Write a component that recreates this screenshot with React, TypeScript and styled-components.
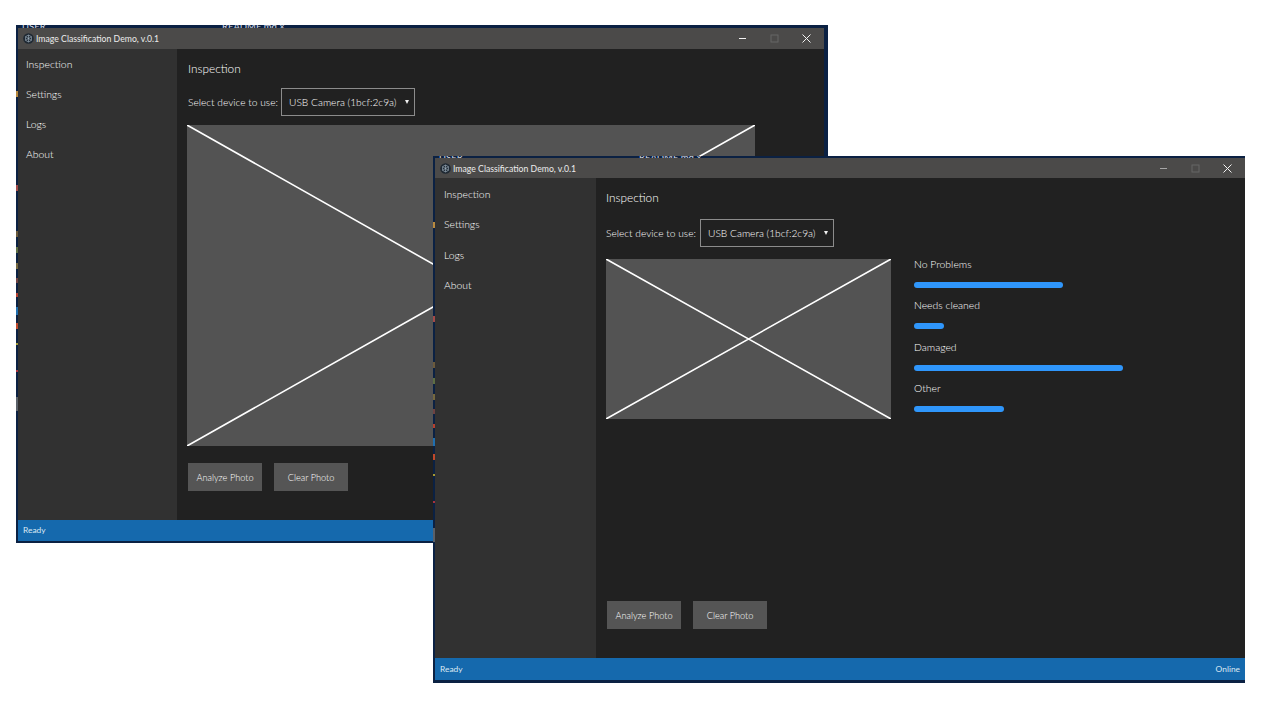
import styled, { createGlobalStyle } from 'styled-components';

type WindowMetrics = {
  left: number;
  top: number;
  height: number;
  rightEdge: number;
  bottomEdge: number;
  stripHeight: number;
  titleHeight: number;
  statusHeight: number;
  sidebarWidth: number;
  navHeight: number;
  navTop: number;
  navIndent: number;
  textIndent: number;
  headingGap: number;
  deviceGap: number;
  imageWidth: number;
  imageHeight: number;
  minimizeColor: string;
};

type DemoWindowProps = {
  metrics: WindowMetrics;
  showOnline?: boolean;
  showResults?: boolean;
};

const backWindow: WindowMetrics = {
  left: 16,
  top: 25,
  height: 518,
  rightEdge: 4,
  bottomEdge: 2,
  stripHeight: 3,
  titleHeight: 21,
  statusHeight: 21,
  sidebarWidth: 159,
  navHeight: 30,
  navTop: 0,
  navIndent: 8,
  textIndent: 1,
  headingGap: 10,
  deviceGap: 9,
  imageWidth: 568,
  imageHeight: 321,
  minimizeColor: '#f2f2f2',
};

const frontWindow: WindowMetrics = {
  left: 433,
  top: 156,
  height: 527,
  rightEdge: 0,
  bottomEdge: 3,
  stripHeight: 2,
  titleHeight: 20,
  statusHeight: 22,
  sidebarWidth: 161,
  navHeight: 30.4,
  navTop: 1,
  navIndent: 9,
  textIndent: 0,
  headingGap: 12,
  deviceGap: 12,
  imageWidth: 285,
  imageHeight: 160,
  minimizeColor: '#a6a6a6',
};

const results = [
  { label: 'No Problems', width: 149 },
  { label: 'Needs cleaned', width: 30 },
  { label: 'Damaged', width: 209 },
  { label: 'Other', width: 90 },
];

const navItems = ['Inspection', 'Settings', 'Logs', 'About'];

// bits of the desktop that show through down the left edge of each window
const edgeSpecks = `linear-gradient(
  to bottom,
  transparent 66px, #b98a3f 66px, #b98a3f 72px,
  transparent 72px, transparent 160px, #a34a4a 160px, #a34a4a 166px,
  transparent 166px, transparent 206px, #6b5a3c 206px, #6b5a3c 212px,
  transparent 212px, transparent 222px, #5d6e44 222px, #5d6e44 228px,
  transparent 228px, transparent 238px, #75683f 238px, #75683f 244px,
  transparent 244px, transparent 253px, #6e4242 253px, #6e4242 258px,
  transparent 258px, transparent 268px, #b5402f 268px, #b5402f 272px,
  transparent 272px, transparent 282px, #1f6fb0 282px, #1f6fb0 290px,
  transparent 290px, transparent 298px, #c0492c 298px, #c0492c 304px,
  transparent 304px, transparent 318px, #a59a34 318px, #a59a34 320px,
  transparent 320px, transparent 345px, #a8323f 345px, #a8323f 347px,
  transparent 347px, transparent 372px, #5a6068 372px, #5a6068 386px,
  transparent 386px
)`;

const GlobalStyle = createGlobalStyle`
  html, body {
    margin: 0;
    background: #ffffff;
  }

  body {
    font-family: Lato, 'Open Sans', sans-serif;
    font-weight: 300;
  }
`;

const Desktop = styled.div`
  position: relative;
  width: 1280px;
  height: 720px;
  overflow: hidden;
  background: #ffffff;
`;

const WindowFrame = styled.section<{ $metrics: WindowMetrics }>`
  position: absolute;
  left: ${({ $metrics }) => $metrics.left}px;
  top: ${({ $metrics }) => $metrics.top}px;
  width: 812px;
  height: ${({ $metrics }) => $metrics.height}px;
  display: flex;
  flex-direction: column;
  box-sizing: border-box;
  padding: 0 ${({ $metrics }) => $metrics.rightEdge}px ${({ $metrics }) => $metrics.bottomEdge}px 2px;
  background: ${edgeSpecks} left top / 2px 100% no-repeat, #0b2143;
`;

const BehindStrip = styled.div<{ $height: number }>`
  height: ${({ $height }) => $height}px;
  flex: none;
  display: flex;
  overflow: hidden;
  padding-left: 4px;
  font-size: 9.5px;
  font-weight: 400;
  line-height: 3px;
  color: #d4d9e2;
  white-space: nowrap;
`;

const BehindFolder = styled.span`
  width: 200px;
  flex: none;
`;

const TitleBar = styled.header<{ $height: number }>`
  height: ${({ $height }) => $height}px;
  flex: none;
  display: flex;
  align-items: center;
  padding: 0 2px 0 5px;
  background: #4b4a49;
  color: #ececec;
  font-size: 8.7px;
  font-weight: 400;
`;

const AppIcon = styled.svg`
  width: 11px;
  height: 11px;
  flex: none;
  margin-right: 2px;
`;

const TitleText = styled.span`
  flex: 1;
`;

const WindowButton = styled.span`
  width: 32px;
  height: 20px;
  flex: none;
  display: flex;
  align-items: center;
  justify-content: center;
`;

const Main = styled.div`
  flex: 1;
  min-height: 0;
  display: flex;
`;

const Sidebar = styled.nav<{ $width: number; $top: number }>`
  width: ${({ $width }) => $width}px;
  flex: none;
  box-sizing: border-box;
  padding-top: ${({ $top }) => $top}px;
  background: #313131;
`;

const NavItem = styled.div<{ $height: number; $indent: number }>`
  height: ${({ $height }) => $height}px;
  line-height: ${({ $height }) => $height}px;
  padding-left: ${({ $indent }) => $indent}px;
  color: #ffffff;
  font-size: 10.4px;
`;

const Content = styled.main`
  flex: 1;
  min-width: 0;
  display: flex;
  flex-direction: column;
  padding: 11px 10px 29px;
  background: #212121;
  color: #ffffff;
`;

const Heading = styled.h1<{ $gap: number; $indent: number }>`
  margin: 0 0 ${({ $gap }) => $gap}px;
  padding-left: ${({ $indent }) => $indent}px;
  font-size: 11.8px;
  font-weight: 300;
  line-height: 18px;
`;

const DeviceRow = styled.div<{ $gap: number }>`
  display: flex;
  align-items: center;
  gap: 3px;
  margin-bottom: ${({ $gap }) => $gap}px;
  font-size: 10.2px;
  white-space: nowrap;
`;

const DeviceLabel = styled.span<{ $indent: number }>`
  width: 91px;
  flex: none;
  box-sizing: border-box;
  padding-left: ${({ $indent }) => $indent}px;
`;

const DeviceSelect = styled.div`
  width: 134px;
  height: 28px;
  flex: none;
  box-sizing: border-box;
  display: flex;
  align-items: center;
  justify-content: space-between;
  padding: 0 5px 0 7px;
  border: 1px solid #8c8c8c;
`;

const SelectArrow = styled.span`
  width: 0;
  height: 0;
  border-left: 2.5px solid transparent;
  border-right: 2.5px solid transparent;
  border-top: 4px solid #f0f0f0;
`;

const Workspace = styled.div`
  display: flex;
  gap: 23px;
`;

const Preview = styled.div<{ $width: number; $height: number }>`
  width: ${({ $width }) => $width}px;
  height: ${({ $height }) => $height}px;
  flex: none;
  background: #535353;
`;

const PreviewCross = styled.svg`
  display: block;
  width: 100%;
  height: 100%;
`;

const Results = styled.div`
  display: flex;
  flex-direction: column;
  width: 240px;
`;

const ResultRow = styled.div`
  height: 41.4px;
  font-size: 10.4px;
  line-height: 10px;
`;

const ResultBar = styled.div`
  height: 6px;
  margin-top: 13px;
  border-radius: 3px;
  background: #2f96fb;
`;

const Actions = styled.div`
  display: flex;
  gap: 12px;
  margin-top: auto;
  padding-left: 1px;
`;

const ActionButton = styled.button`
  width: 74px;
  height: 28px;
  padding: 0;
  border: none;
  background: #555555;
  color: #ffffff;
  font-family: inherit;
  font-size: 9.2px;
  font-weight: 300;
`;

const StatusBar = styled.footer<{ $height: number }>`
  height: ${({ $height }) => $height}px;
  flex: none;
  display: flex;
  align-items: center;
  justify-content: space-between;
  padding: 0 5px 1px;
  box-sizing: border-box;
  background: #1569ad;
  color: #dbe8f3;
  font-size: 8.4px;
  font-weight: 400;
`;

const DemoWindow = ({ metrics, showOnline, showResults }: DemoWindowProps) => (
  <WindowFrame $metrics={metrics}>
    <BehindStrip $height={metrics.stripHeight}>
      <BehindFolder>USER</BehindFolder>
      <span>README.md ×</span>
    </BehindStrip>
    <TitleBar $height={metrics.titleHeight}>
      <AppIcon viewBox="0 0 12 12" aria-hidden="true">
        <circle cx="6" cy="6" r="5.8" fill="#1f2933" />
        <path
          d="M6 2.2l3.2 1.8v4L6 9.8 2.8 8V4zM2.8 4l6.4 4M9.2 4L2.8 8M6 2.2v7.6"
          fill="none"
          stroke="#9fb0bf"
          strokeWidth="0.7"
        />
      </AppIcon>
      <TitleText>Image Classification Demo, v.0.1</TitleText>
      <WindowButton>
        <svg width="9" height="9" viewBox="0 0 9 9" aria-hidden="true">
          <path d="M1 4.5h7" stroke={metrics.minimizeColor} />
        </svg>
      </WindowButton>
      <WindowButton>
        <svg width="9" height="9" viewBox="0 0 9 9" aria-hidden="true">
          <rect x="1" y="1" width="7" height="7" fill="none" stroke="#666666" />
        </svg>
      </WindowButton>
      <WindowButton>
        <svg width="9" height="9" viewBox="0 0 9 9" aria-hidden="true">
          <path d="M.5.5l8 8M8.5.5l-8 8" stroke="#f2f2f2" />
        </svg>
      </WindowButton>
    </TitleBar>
    <Main>
      <Sidebar $width={metrics.sidebarWidth} $top={metrics.navTop}>
        {navItems.map((item) => (
          <NavItem key={item} $height={metrics.navHeight} $indent={metrics.navIndent}>
            {item}
          </NavItem>
        ))}
      </Sidebar>
      <Content>
        <Heading $gap={metrics.headingGap} $indent={metrics.textIndent}>
          Inspection
        </Heading>
        <DeviceRow $gap={metrics.deviceGap}>
          <DeviceLabel $indent={metrics.textIndent}>Select device to use:</DeviceLabel>
          <DeviceSelect>
            <span>USB Camera (1bcf:2c9a)</span>
            <SelectArrow />
          </DeviceSelect>
        </DeviceRow>
        <Workspace>
          <Preview $width={metrics.imageWidth} $height={metrics.imageHeight}>
            <PreviewCross viewBox={`0 0 ${metrics.imageWidth} ${metrics.imageHeight}`} aria-hidden="true">
              <path
                d={`M0 0L${metrics.imageWidth} ${metrics.imageHeight}M${metrics.imageWidth} 0L0 ${metrics.imageHeight}`}
                stroke="#ffffff"
                strokeWidth="1.6"
              />
            </PreviewCross>
          </Preview>
          {showResults && (
            <Results>
              {results.map((result) => (
                <ResultRow key={result.label}>
                  {result.label}
                  <ResultBar style={{ width: result.width }} />
                </ResultRow>
              ))}
            </Results>
          )}
        </Workspace>
        <Actions>
          <ActionButton>Analyze Photo</ActionButton>
          <ActionButton>Clear Photo</ActionButton>
        </Actions>
      </Content>
    </Main>
    <StatusBar $height={metrics.statusHeight}>
      <span>Ready</span>
      {showOnline && <span>Online</span>}
    </StatusBar>
  </WindowFrame>
);

const App = () => (
  <Desktop>
    <GlobalStyle />
    <DemoWindow metrics={backWindow} />
    <DemoWindow metrics={frontWindow} showOnline showResults />
  </Desktop>
);

export default App;
